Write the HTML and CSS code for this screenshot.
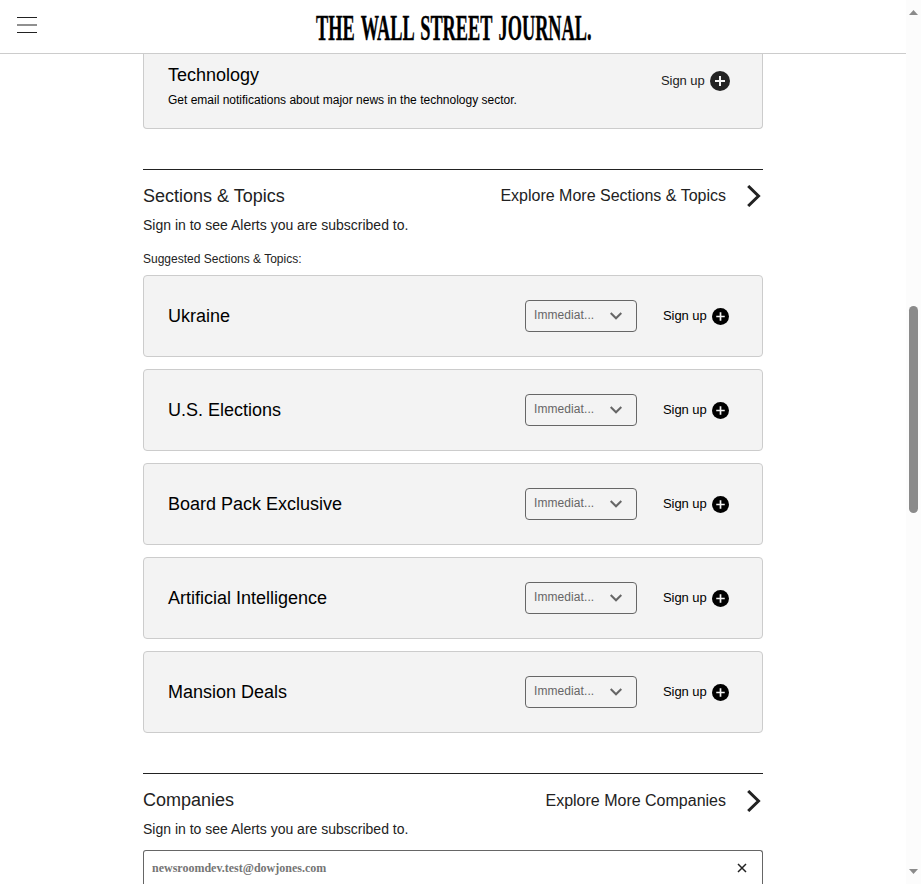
FILE: index.html
```html
<!DOCTYPE html>
<html lang="en">
<head>
<meta charset="utf-8">
<title>Alerts - The Wall Street Journal</title>
<link rel="stylesheet" href="styles.css">
</head>
<body>
<svg class="sprite" aria-hidden="true">
  <symbol id="plus" viewBox="0 0 20 20"><circle cx="10" cy="10" r="10" fill="currentColor"/><path d="M10 5v10M5 10h10" stroke="#f3f3f3" stroke-width="2"/></symbol>
  <symbol id="down" viewBox="0 0 12 8"><path d="M.7 1L6 6.300 11.300 1" fill="none" stroke="currentColor" stroke-width="2"/></symbol>
  <symbol id="right" viewBox="0 0 14 22"><path d="M1.2 1l10.300 10L1.200 21" fill="none" stroke="currentColor" stroke-width="3"/></symbol>
</svg>
<div class="window">
  <div class="page">
    <header class="header">
      <button class="menu" aria-label="Menu"><svg width="20" height="17"><path d="M0 .5h20M0 15.5h20" stroke="#222"/><path d="M0 8h20" stroke="#909090" stroke-width="2"/></svg></button>
      <svg class="logo" width="560" height="38">
        <text x="2" y="28" textLength="275.500" lengthAdjust="spacingAndGlyphs">THE WALL STREET JOURNAL.</text>
      </svg>
    </header>
    <main class="content">
      <article class="card card-tech">
        <div class="card-text"><h3>Technology</h3><p>Get email notifications about major news in the technology sector.</p></div>
        <button class="signup signup-large">Sign up<svg><use href="#plus"/></svg></button>
      </article>
      <section class="section">
        <div class="section-head"><h2>Sections &amp; Topics</h2><a class="explore">Explore More Sections &amp; Topics<svg><use href="#right"/></svg></a></div>
        <p class="note">Sign in to see Alerts you are subscribed to.</p>
        <p class="suggested">Suggested Sections &amp; Topics:</p>
        <div class="cards">
          <article class="card"><h3>Ukraine</h3><div class="select"><span>Immediat...</span><svg><use href="#down"/></svg></div><button class="signup">Sign up<svg><use href="#plus"/></svg></button></article>
          <article class="card"><h3>U.S. Elections</h3><div class="select"><span>Immediat...</span><svg><use href="#down"/></svg></div><button class="signup">Sign up<svg><use href="#plus"/></svg></button></article>
          <article class="card"><h3>Board Pack Exclusive</h3><div class="select"><span>Immediat...</span><svg><use href="#down"/></svg></div><button class="signup">Sign up<svg><use href="#plus"/></svg></button></article>
          <article class="card"><h3>Artificial Intelligence</h3><div class="select"><span>Immediat...</span><svg><use href="#down"/></svg></div><button class="signup">Sign up<svg><use href="#plus"/></svg></button></article>
          <article class="card"><h3>Mansion Deals</h3><div class="select"><span>Immediat...</span><svg><use href="#down"/></svg></div><button class="signup">Sign up<svg><use href="#plus"/></svg></button></article>
        </div>
      </section>
      <section class="section">
        <div class="section-head"><h2>Companies</h2><a class="explore explore-companies">Explore More Companies<svg><use href="#right"/></svg></a></div>
        <p class="note">Sign in to see Alerts you are subscribed to.</p>
        <div class="search"><span>newsroomdev.test@dowjones.com</span><svg width="10" height="10"><path d="M1 1l8 8M9 1L1 9" stroke="#222" stroke-width="1.5"/></svg></div>
      </section>
    </main>
  </div>
  <div class="scrollbar">
    <svg width="9" height="5"><path d="M0 5L4.5 0 9 5z" fill="#8b8b8b"/></svg>
    <div class="thumb"></div>
    <svg class="arrow-down" width="9" height="5"><path d="M0 0l4.500 5L9 0z" fill="#8b8b8b"/></svg>
  </div>
</div>
</body>
</html>
```
FILE: styles.css
```css
* { box-sizing: border-box; }
body, h2, h3, p { margin: 0; }
h2, h3 { font-weight: 400; }
body { font-family: "Liberation Sans", Arial, sans-serif; color: #222; background: #fff; overflow: hidden; }
button { border: 0; padding: 0; background: none; font: inherit; color: inherit; }
svg { display: block; flex: none; }
.sprite { display: none; }
.window { display: flex; height: 884px; overflow: hidden; }
.page { flex: 1; }
.header { display: flex; height: 54px; border-bottom: 1px solid #ccc; padding: 12px 17px 0; }
.menu { width: 20px; height: 17px; margin-top: 5px; }
.logo { margin-left: 277px; }
.logo text { font: bold 36px "Liberation Serif", serif; word-spacing: 4px; fill: #000; stroke: #000; stroke-width: .4px; }
.content { width: 620px; margin-left: 143px; }
.card { display: flex; align-items: center; height: 82px; padding: 0 33px 0 24px; border: 1px solid #ccc; border-radius: 4px; background: #f3f3f3; color: #000; }
.card h3 { flex: 1; font-size: 18px; line-height: 24px; }
.card-tech { height: 75px; padding-right: 32px; align-items: flex-start; border-top: 0; border-radius: 0 0 4px 4px; }
.card-text { flex: 1; padding-top: 9px; }
.card-text p { font-size: 12px; line-height: 16px; margin-top: 5px; }
.signup { display: flex; align-items: center; justify-content: space-between; width: 66px; font-size: 13px; line-height: 16px; letter-spacing: -.06px; color: #000; white-space: nowrap; }
.signup svg { width: 17px; height: 17px; }
.signup-large { width: 69px; padding-top: 17px; color: #222; }
.signup-large svg { width: 20px; height: 20px; }
.select { display: flex; align-items: center; justify-content: space-between; width: 112px; height: 32px; margin-right: 26px; padding: 0 14px 0 8px; border: 1px solid #666; border-radius: 4px; color: #666; font-size: 12px; }
.select span { line-height: 14px; margin-top: -3px; letter-spacing: .08px; }
.select svg { width: 12px; height: 8px; }
.section { margin-top: 40px; border-top: 1px solid #222; }
.section-head { display: flex; align-items: center; justify-content: space-between; height: 24px; margin-top: 14px; }
.section-head h2 { font-size: 18px; line-height: 24px; }
.explore { display: flex; align-items: center; gap: 21px; padding-right: 2px; font-size: 16px; line-height: 24px; }
.explore-companies { padding-top: 2px; }
.explore svg { width: 14px; height: 22px; }
.note { margin-top: 7px; font-size: 14px; line-height: 20px; }
.suggested { margin-top: 16px; font-size: 12px; line-height: 16px; }
.cards { display: grid; gap: 12px; margin-top: 8px; }
.search { display: flex; align-items: center; justify-content: space-between; height: 34px; margin-top: 11px; padding: 0 15px 0 8px; border: 1px solid #666; border-bottom: 0; border-radius: 3px 3px 0 0; font: bold 12px/16px "Liberation Serif", serif; color: #757575; }
.scrollbar { width: 15px; background: #fcfcfc; padding: 10px 3px 0; display: flex; flex-direction: column; }
.thumb { width: 9px; height: 207px; margin-top: 291px; border-radius: 5px; background: #8b8b8b; }
.arrow-down { margin-top: 356px; }
```
